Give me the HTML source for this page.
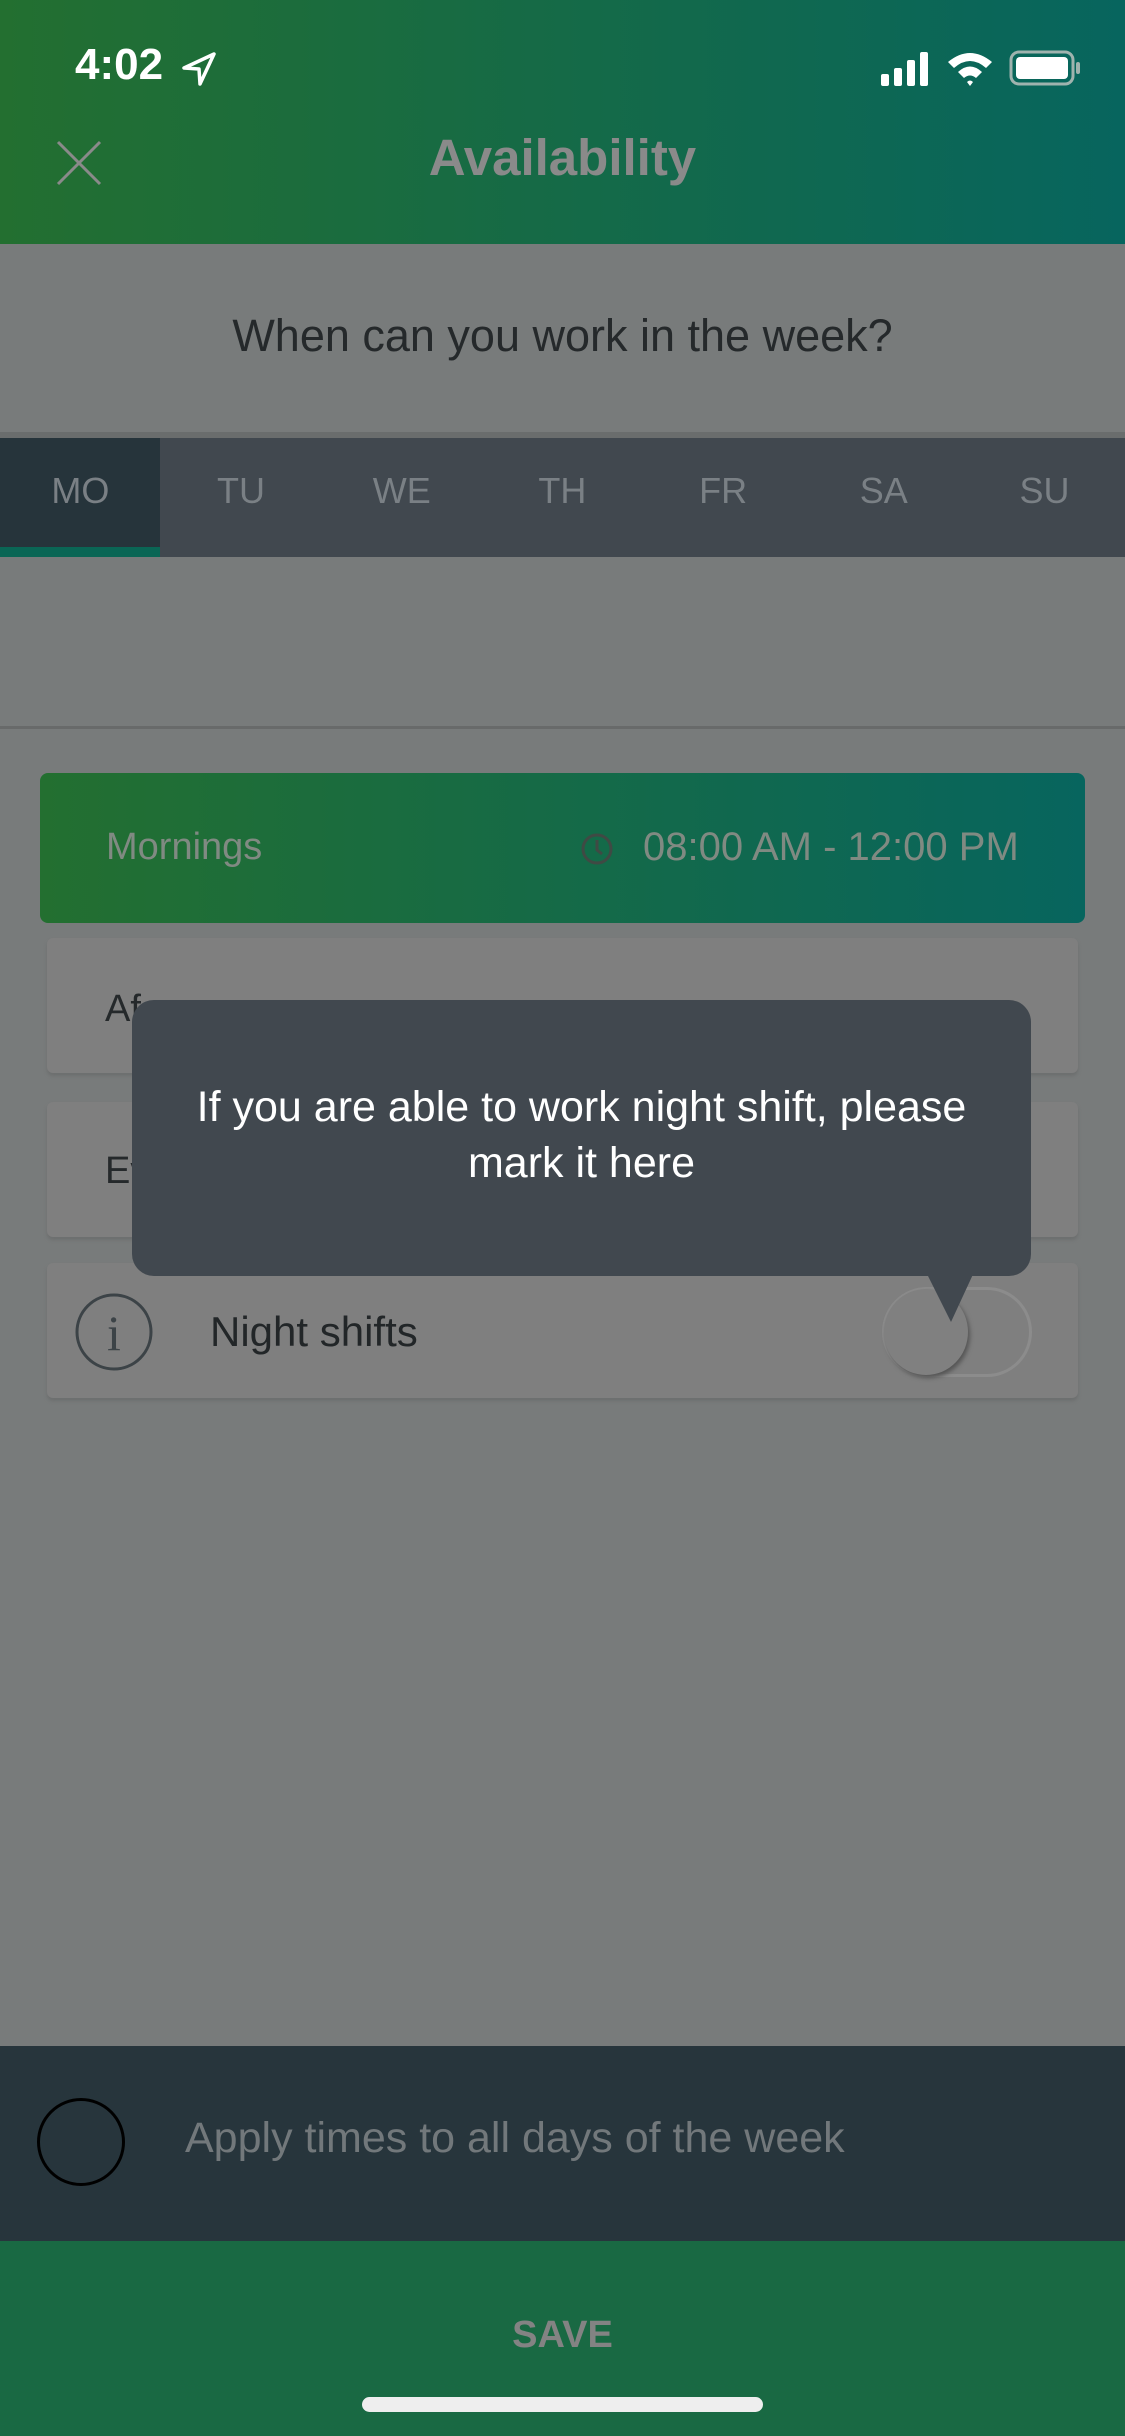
<!DOCTYPE html>
<html><head><meta charset="utf-8"><style>
*{margin:0;padding:0;box-sizing:border-box}
body{width:1125px;height:2436px;overflow:hidden;background:#787b7b;font-family:"Liberation Sans",sans-serif;position:relative}
.abs{position:absolute}
</style></head><body>
<div class="abs" style="left:0;top:0;width:1125px;height:244px;background:linear-gradient(90deg,#236f30,#07655e)"></div>
<div class="abs" style="left:75px;top:40px;color:#fff;font-size:44px;font-weight:bold">4:02</div>
<svg class="abs" style="left:182px;top:52px" width="34" height="34" viewBox="0 0 34 34"><path d="M32 2 L2 16 L17 17 L18 32 Z" fill="none" stroke="#fff" stroke-width="3.5" stroke-linejoin="round"/></svg>
<svg class="abs" style="left:880px;top:48px" width="200" height="40" viewBox="0 0 200 40">
<rect x="1" y="26" width="8" height="12" rx="2" fill="#fff"/><rect x="14" y="20" width="8" height="18" rx="2" fill="#fff"/><rect x="27" y="12" width="8" height="26" rx="2" fill="#fff"/><rect x="40" y="4" width="8" height="34" rx="2" fill="#fff"/>
<path d="M68 14 Q90 -4 112 14 L106 20 Q90 6 74 20Z M78 24 Q90 13 102 24 L96 30 Q90 25 84 30Z M87 34 L90 38 L93 34 Q90 31 87 34Z" fill="#fff"/>
<rect x="131" y="4" width="62" height="32" rx="8" fill="none" stroke="#9fb3ae" stroke-width="3"/><rect x="136" y="9" width="52" height="22" rx="4" fill="#fff"/><rect x="196" y="14" width="4" height="12" rx="2" fill="#9fb3ae"/></svg>
<svg class="abs" style="left:56px;top:140px" width="46" height="46"><path d="M2 2L44 44M44 2L2 44" stroke="#8a8a8a" stroke-width="3"/></svg>
<div class="abs" style="left:0;width:1125px;top:128px;text-align:center;color:#8a8a8a;font-size:51px;font-weight:bold">Availability</div>
<div class="abs" style="left:0;width:1125px;top:310px;text-align:center;color:#25292b;font-size:45px">When can you work in the week?</div>
<div class="abs" style="left:0;top:432px;width:1125px;height:6px;background:#6a6d6d"></div>
<div class="abs" style="left:0;top:438px;width:1125px;height:119px;background:#41484f"></div>
<div class="abs" style="left:0;top:438px;width:160px;height:109px;background:#26343b"></div>
<div class="abs" style="left:0;top:547px;width:160px;height:10px;background:#0a6655"></div>
<div class="abs" style="left:0;top:470px;width:1125px;display:flex;color:#7a8085;font-size:36px">
<div style="width:160.7px;text-align:center">MO</div><div style="width:160.7px;text-align:center">TU</div><div style="width:160.7px;text-align:center">WE</div><div style="width:160.7px;text-align:center">TH</div><div style="width:160.7px;text-align:center">FR</div><div style="width:160.7px;text-align:center">SA</div><div style="width:160.7px;text-align:center">SU</div></div>
<div class="abs" style="left:0;top:726px;width:1125px;height:3px;background:#686a6a"></div>
<div class="abs" style="left:40px;top:773px;width:1045px;height:150px;border-radius:8px;background:linear-gradient(90deg,#236f30,#07655e)"></div>
<div class="abs" style="left:106px;top:826px;color:#808a82;font-size:38px">Mornings</div>
<svg class="abs" style="left:580px;top:832px" width="34" height="34"><circle cx="17" cy="17" r="14" fill="none" stroke="#3f4a44" stroke-width="3"/><path d="M17 8V18L22 22" stroke="#3f4a44" stroke-width="3" fill="none"/></svg>
<div class="abs" style="left:643px;top:825px;color:#808a82;font-size:40px">08:00 AM - 12:00 PM</div>
<div class="abs" style="left:47px;top:938px;width:1031px;height:135px;border-radius:6px;background:#7f7f7f;box-shadow:0 3px 3px #6d6f6f"></div>
<div class="abs" style="left:105px;top:988px;color:#25292b;font-size:38px">Af</div>
<div class="abs" style="left:47px;top:1102px;width:1031px;height:135px;border-radius:6px;background:#7f7f7f;box-shadow:0 3px 3px #6d6f6f"></div>
<div class="abs" style="left:105px;top:1150px;color:#25292b;font-size:38px">Ev</div>
<div class="abs" style="left:47px;top:1263px;width:1031px;height:135px;border-radius:6px;background:#7f7f7f;box-shadow:0 3px 3px #6d6f6f"></div>
<svg class="abs" style="left:74px;top:1292px" width="80" height="80"><circle cx="40" cy="40" r="37" fill="none" stroke="#3c4347" stroke-width="3"/><text x="40" y="58" text-anchor="middle" font-family="Liberation Serif" font-size="50" fill="#3c4347">i</text></svg>
<div class="abs" style="left:210px;top:1308px;color:#222628;font-size:42px">Night shifts</div>
<div class="abs" style="left:882px;top:1287px;width:150px;height:90px;border-radius:45px;border:3px solid #8c8c8c"></div>
<div class="abs" style="left:884px;top:1289px;width:84px;height:86px;border-radius:50%;background:#808080;box-shadow:2px 3px 4px #555"></div>
<div class="abs" style="left:132px;top:1000px;width:899px;height:276px;border-radius:22px;background:#41484f"></div>
<svg class="abs" style="left:925px;top:1270px" width="50" height="54"><path d="M0 0H50L26 52Z" fill="#41484f"/></svg>
<div class="abs" style="left:132px;top:1079px;width:899px;text-align:center;color:#fff;font-size:43px;line-height:56px">If you are able to work night shift, please<br>mark it here</div>
<div class="abs" style="left:0;top:2046px;width:1125px;height:195px;background:#27353c"></div>
<div class="abs" style="left:37px;top:2098px;width:88px;height:88px;border-radius:50%;border:3px solid #000"></div>
<div class="abs" style="left:185px;top:2114px;color:#72787b;font-size:43px">Apply times to all days of the week</div>
<div class="abs" style="left:0;top:2241px;width:1125px;height:195px;background:#196943"></div>
<div class="abs" style="left:0;width:1125px;top:2314px;text-align:center;color:#838383;font-size:38px;font-weight:bold">SAVE</div>
<div class="abs" style="left:362px;top:2397px;width:401px;height:15px;border-radius:8px;background:#eee"></div>
</body></html>
